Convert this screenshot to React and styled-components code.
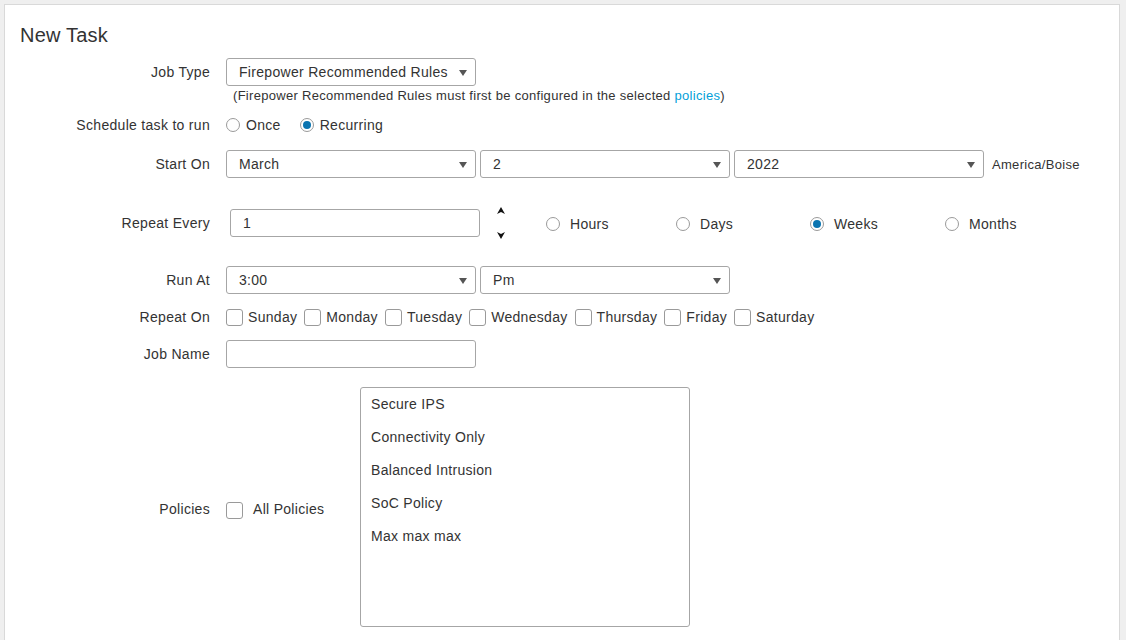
import React from "react";
import styled, { createGlobalStyle } from "styled-components";

const GlobalStyle = createGlobalStyle`
  body {
    margin: 0;
    background: #efefef;
    font-family: "Liberation Sans", Arial, sans-serif;
    color: #333;
  }
`;

const Panel = styled.div`
  margin: 4px 6px 0 4px;
  min-height: 700px;
  background: #fff;
  border: 1px solid #d9d9d9;
  padding: 18px 15px 16px;
  box-sizing: border-box;
`;

const Title = styled.h2`
  margin: 0;
  font-size: 20px;
  line-height: 24px;
  font-weight: normal;
  letter-spacing: 0.2px;
  color: #333;
`;

const Row = styled.div`
  display: grid;
  grid-template-columns: 190px 1fr;
  column-gap: 16px;
  align-items: center;
  margin-top: ${({ $mt }) => $mt}px;
  min-height: ${({ $h }) => $h}px;
`;

const Label = styled.label`
  text-align: right;
  font-size: 14px;
  line-height: 18px;
  letter-spacing: 0.3px;
  color: #333;
  margin-top: ${({ $shift }) => $shift || 0}px;
`;

const Fields = styled.div`
  display: flex;
  align-items: center;
  gap: ${({ $gap }) => $gap || 0}px;
`;

const SelectBox = styled.div`
  width: 250px;
  height: 28px;
  box-sizing: border-box;
  border: 1px solid #a6a6a6;
  border-radius: 3px;
  display: flex;
  align-items: center;
  justify-content: space-between;
  padding: 0 8px 0 12px;
  font-size: 14px;
  letter-spacing: 0.3px;
  color: #333;
  background: #fff;
`;

const Caret = styled.span`
  width: 0;
  height: 0;
  border-left: 4px solid transparent;
  border-right: 4px solid transparent;
  border-top: 6px solid #555;
  margin-top: 2px;
`;

const TextInput = styled.div`
  width: 250px;
  height: 28px;
  box-sizing: border-box;
  border: 1px solid #a6a6a6;
  border-radius: 3px;
  display: flex;
  align-items: center;
  padding-left: 12px;
  font-size: 14px;
  color: #333;
  margin-left: ${({ $ml }) => $ml || 0}px;
`;

const Hint = styled.div`
  grid-column: 2;
  padding-left: 7px;
  font-size: 13px;
  line-height: 16px;
  letter-spacing: 0.3px;
  color: #333;
`;

const HintLink = styled.a`
  color: #049fd9;
  text-decoration: none;
`;

const Zone = styled.span`
  font-size: 13px;
  letter-spacing: 0.3px;
  color: #333;
  margin-left: 4px;
`;

const Option = styled.div`
  display: flex;
  align-items: center;
  gap: ${({ $gap }) => $gap}px;
  font-size: 14px;
  letter-spacing: 0.3px;
  color: #333;
  width: ${({ $w }) => ($w ? `${$w}px` : "auto")};
  flex-shrink: 0;
`;

const Radio = styled.span`
  width: 14px;
  height: 14px;
  box-sizing: border-box;
  border-radius: 50%;
  border: 1px solid #9a9a9a;
  background: #fff;
  display: flex;
  align-items: center;
  justify-content: center;
  flex-shrink: 0;
  &::after {
    content: "";
    display: ${({ $checked }) => ($checked ? "block" : "none")};
    width: 8px;
    height: 8px;
    border-radius: 50%;
    background: #0a74b0;
  }
`;

const Check = styled.span`
  width: 17px;
  height: 17px;
  box-sizing: border-box;
  border: 1px solid #9a9a9a;
  border-radius: 3px;
  background: #fff;
  flex-shrink: 0;
  margin-top: ${({ $mt }) => $mt || 0}px;
`;

const Spinner = styled.div`
  display: flex;
  flex-direction: column;
  justify-content: space-between;
  height: 32px;
  margin: 0 41px 0 17px;
`;

const Units = styled.div`
  display: flex;
  align-items: center;
  margin-top: 2px;
`;

const ListBox = styled.div`
  width: 330px;
  height: 240px;
  box-sizing: border-box;
  border: 1px solid #a6a6a6;
  border-radius: 3px;
  flex-shrink: 0;
`;

const ListItem = styled.div`
  height: 33px;
  line-height: 33px;
  padding-left: 10px;
  font-size: 14px;
  letter-spacing: 0.3px;
  color: #333;
`;

const PolicyText = styled.span`
  margin-top: 4px;
`;

const Chevron = ({ up }) => (
  <svg width="8" height="7" viewBox="0 0 8 7">
    <path
      d={up ? "M0 7 L4 0 L8 7 L4 5 Z" : "M0 0 L4 2 L8 0 L4 7 Z"}
      fill="#111"
    />
  </svg>
);

const Select = ({ value }) => (
  <SelectBox>
    <span>{value}</span>
    <Caret />
  </SelectBox>
);

const days = ["Sunday", "Monday", "Tuesday", "Wednesday", "Thursday", "Friday", "Saturday"];
const policies = ["Secure IPS", "Connectivity Only", "Balanced Intrusion", "SoC Policy", "Max max max"];

export default function App() {
  return (
    <>
      <GlobalStyle />
      <Panel>
        <Title>New Task</Title>

        <Row $mt={11} $h={28}>
          <Label>Job Type</Label>
          <Fields>
            <Select value="Firepower Recommended Rules" />
          </Fields>
        </Row>
        <Row $mt={2} $h={16}>
          <Hint>
            (Firepower Recommended Rules must first be configured in the selected{" "}
            <HintLink href="#">policies</HintLink>)
          </Hint>
        </Row>

        <Row $mt={12} $h={18}>
          <Label>Schedule task to run</Label>
          <Fields $gap={19}>
            <Option $gap={6}>
              <Radio />
              Once
            </Option>
            <Option $gap={6}>
              <Radio $checked />
              Recurring
            </Option>
          </Fields>
        </Row>

        <Row $mt={16} $h={28}>
          <Label>Start On</Label>
          <Fields $gap={4}>
            <Select value="March" />
            <Select value="2" />
            <Select value="2022" />
            <Zone>America/Boise</Zone>
          </Fields>
        </Row>

        <Row $mt={22} $h={46}>
          <Label>Repeat Every</Label>
          <Fields>
            <TextInput $ml={4}>1</TextInput>
            <Spinner>
              <Chevron up />
              <Chevron />
            </Spinner>
            <Units>
              <Option $gap={10} $w={130}>
                <Radio />
                Hours
              </Option>
              <Option $gap={10} $w={134}>
                <Radio />
                Days
              </Option>
              <Option $gap={10} $w={135}>
                <Radio $checked />
                Weeks
              </Option>
              <Option $gap={10}>
                <Radio />
                Months
              </Option>
            </Units>
          </Fields>
        </Row>

        <Row $mt={20} $h={28}>
          <Label>Run At</Label>
          <Fields $gap={4}>
            <Select value="3:00" />
            <Select value="Pm" />
          </Fields>
        </Row>

        <Row $mt={14} $h={18}>
          <Label>Repeat On</Label>
          <Fields $gap={7}>
            {days.map((d) => (
              <Option key={d} $gap={5}>
                <Check />
                {d}
              </Option>
            ))}
          </Fields>
        </Row>

        <Row $mt={14} $h={28}>
          <Label>Job Name</Label>
          <Fields>
            <TextInput />
          </Fields>
        </Row>

        <Row $mt={19} $h={240}>
          <Label $shift={4}>Policies</Label>
          <Fields>
            <Option $gap={10} $w={134}>
              <Check $mt={6} />
              <PolicyText>All Policies</PolicyText>
            </Option>
            <ListBox>
              {policies.map((p) => (
                <ListItem key={p}>{p}</ListItem>
              ))}
            </ListBox>
          </Fields>
        </Row>
      </Panel>
    </>
  );
}
